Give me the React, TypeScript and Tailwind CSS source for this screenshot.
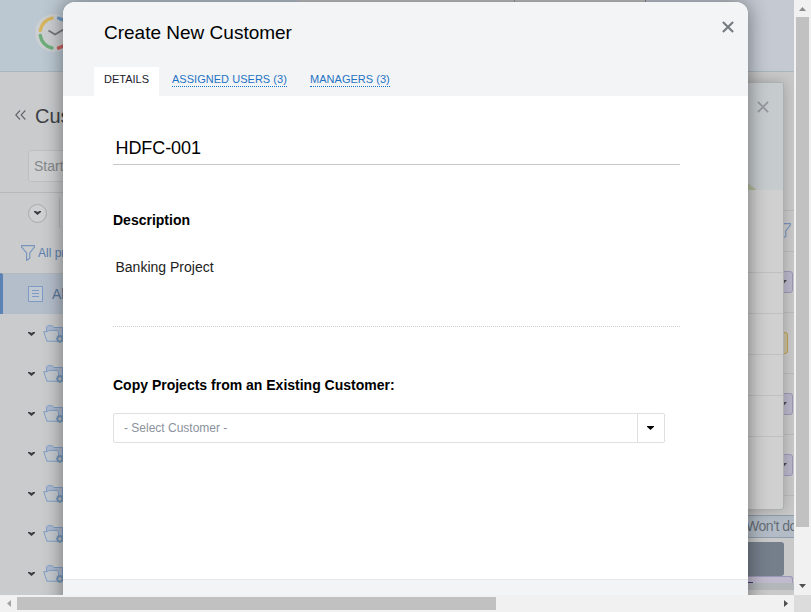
import type { ReactNode } from "react";

const folders = [1, 2, 3, 4, 5, 6, 7];

function Logo() {
  return (
    <svg width="38" height="40" viewBox="0 0 38 40" fill="none">
      <circle cx="19" cy="20" r="19" fill="#cccfd1" />
      <g strokeWidth="3.4" strokeLinecap="round">
        <path d="M5.3 17.5A14.8 14.8 0 0 1 17 5.2" stroke="#d6b55f" />
        <path d="M23.5 5.2A14.8 14.8 0 0 1 34.5 17.5" stroke="#6f9bc6" />
        <path d="M5.3 22.5A14.8 14.8 0 0 0 17 35" stroke="#6fae7c" />
        <path d="M23.5 35A14.8 14.8 0 0 0 34.5 22.5" stroke="#c9615e" />
      </g>
      <path d="M13.5 17.5l6.5 4 9.5-5.5" stroke="#73767c" strokeWidth="1.8" />
    </svg>
  );
}

function Funnel() {
  return (
    <svg className="shrink-0" width="14" height="16" viewBox="0 0 14 16" fill="none" stroke="#7793bd" strokeWidth="1.1">
      <path d="M.6.6h12.8v1.5L8.8 8v5.3L5.6 15.4V8L.6 2.1z" />
    </svg>
  );
}

function FolderIcon() {
  return (
    <svg className="shrink-0" width="22" height="19" viewBox="0 0 22 19" fill="none" stroke="#829fc8" strokeWidth="1">
      <path d="M3.5 7V2.3L4.7 .7h4.6l1.4 1.8h8.8V14" fill="#aebbcf" />
      <path d="M.7 6.7h4.1l1.2-1.3h8.6l1 1.6v9.2H4z" fill="#c5cbd0" />
      <circle cx="17" cy="13.8" r="2.6" strokeWidth="2" stroke="#7799bb" fill="#c0c5ca" />
      <path d="M17 9.9v1.3M17 16.5v1.5M13.1 13.8h1.3M19.7 13.8h1.3M14.2 11l.9.9M14.2 16.6l.9-.9M19.8 11l-.9.9" strokeWidth="1.5" stroke="#7799bb" />
    </svg>
  );
}

function Chevron() {
  return (
    <svg className="shrink-0" width="7" height="4" viewBox="0 0 7 4" fill="#3c3d40">
      <path d="M0 0h1.8l1.7 1L5.2 0H7v1L3.5 4 0 1z" />
    </svg>
  );
}

function Cross({ color, width }: { color: string; width: number }) {
  return (
    <svg width="12" height="12" viewBox="0 0 12 12" stroke={color} strokeWidth={width}>
      <path d="M.9.9l10.2 10.2M11.1.9L.9 11.1" />
    </svg>
  );
}

function Sidebar() {
  return (
    <aside className="flex w-[200px] shrink-0 flex-col bg-[#c9cbcd]">
      <div className="flex h-[78px] items-center gap-[9px] pt-[9px] pl-[15px]">
        <svg className="-mt-[2px]" width="11" height="10" viewBox="0 0 11 10" fill="none" stroke="#606469" strokeWidth="1.1">
          <path d="M5 .5L.8 5 5 9.5M10.3 .5L6.1 5l4.2 4.5" />
        </svg>
        <span className="text-[20px] leading-6 text-[#3d4043]">Customers</span>
      </div>
      <div className="ml-7 flex h-8 w-[160px] items-center rounded-[3px] border border-[#bdbfc0] bg-[#cfd0d1] pl-[5px] text-[14px] text-[#85888b]">
        Start typing
      </div>
      <div className="mt-[10px] flex h-[41px] shrink-0 items-center border-t border-[#b6b8ba] pl-7">
        <div className="flex h-[19px] w-[19px] items-center justify-center rounded-full border border-[#a9abad] bg-[#cfd0d1]">
          <Chevron />
        </div>
        <div className="ml-3 h-[30px] w-px bg-[#b6b8ba]" />
      </div>
      <div className="flex h-10 items-center gap-[3px] pl-[21px] text-[12px] text-[#5b7fae]">
        <Funnel />
        <span className="whitespace-nowrap">All projects</span>
      </div>
      <div className="flex h-[41px] items-center border-t border-l-[3px] border-t-[#b7babd] border-l-[#5a82b4] bg-[#b4becb] pl-[25px]">
        <svg width="15" height="16" viewBox="0 0 15 16" fill="none" stroke="#7e9ac4">
          <path d="M.5.5h14v15H.5z" fill="#c0c8d1" />
          <path d="M4 4.5h7M4 7.5h7M4 10.5h7" />
        </svg>
        <span className="ml-[9px] text-[14px] text-[#5b7799]">All Customers</span>
      </div>
      {folders.map((f) => (
        <div key={f} className="flex h-10 items-center gap-2 pl-7">
          <Chevron />
          <FolderIcon />
        </div>
      ))}
    </aside>
  );
}

function StatusRow({ children }: { children?: ReactNode }) {
  return <div className="flex h-[61px] items-center border-b border-[#babbbb]">{children}</div>;
}

function Badge() {
  return (
    <div className="flex h-[22px] w-[53px] items-center justify-end rounded-[3px] border border-[#9c97b8] bg-[#b9b6ca] pr-[5px]">
      <svg width="7" height="4" viewBox="0 0 7 4" fill="#4b4b50"><path d="M0 0h7L3.5 4z" /></svg>
    </div>
  );
}

function TaskColumn() {
  return (
    <div className="flex w-[54px] shrink-0 flex-col bg-[#c9c9c9]">
      <div className="h-[139px] border-b border-[#babbbb]" />
      <div className="flex h-[41px] items-center justify-end border-b border-[#babbbb] pr-[3px]">
        <Funnel />
      </div>
      <StatusRow><Badge /></StatusRow>
      <StatusRow>
        <div className="h-[22px] w-[48px] rounded-[3px] border border-[#c0a14d] bg-[#c8bd9f]" />
      </StatusRow>
      <StatusRow><Badge /></StatusRow>
      <StatusRow><Badge /></StatusRow>
      <div className="mt-[19px] flex h-[23px] shrink-0 items-center overflow-hidden border-y border-[#8f9eac] bg-[#b3bcc6] pl-[6px] text-[14px] tracking-[-0.45px] whitespace-nowrap text-[#656d76]">
        Won't do
      </div>
      <div className="mt-1 h-[34px] w-[44px] shrink-0 rounded-r-[3px] bg-[#757f8c]" />
      <div className="h-[7px] w-[53px] shrink-0 rounded-tr-[3px] border-t border-r border-[#9c97b8] bg-[#bfbacd] pt-[5px]">
        <div className="h-px w-[13px] bg-[#413a78]" />
      </div>
      <div className="h-[7px] shrink-0 bg-[#b3b7b9]" />
    </div>
  );
}

function DetailPanel() {
  return (
    <div className="absolute top-[82px] left-[600px] flex h-[428px] w-[184px] flex-col overflow-hidden rounded-[3px] border border-[#adb0b1] bg-[#d0d0d0] shadow-[0_0_14px_rgba(0,0,0,0.22)]">
      <div className="flex h-[107px] shrink-0 flex-col items-end justify-between bg-[#c6cbce] pt-[18px]">
        <div className="pr-[14px]"><Cross color="#9599a0" width={1.8} /></div>
        <svg className="mr-[26px]" width="12" height="9" viewBox="0 0 12 9" fill="#b5bd9f">
          <path d="M0 0l12 9H0z" />
        </svg>
      </div>
      <div className="h-[83px] border-b border-[#c0c0c0]" />
      <div className="h-[41px] border-b border-[#c0c0c0]" />
      <div className="h-[41px] border-b border-[#c0c0c0]" />
      <div className="h-[41px] border-b border-[#c0c0c0]" />
      <div className="h-[41px] border-b border-[#c0c0c0]" />
    </div>
  );
}

function Modal() {
  return (
    <div className="absolute top-[2px] left-[63px] flex h-[640px] w-[685px] flex-col rounded-[12px] bg-white text-black shadow-[0_0_20px_rgba(0,0,0,0.46)]">
      <div className="flex h-[94px] shrink-0 flex-col justify-between rounded-t-[12px] bg-[#f3f4f6]">
        <div className="flex items-start justify-between pt-[18px] pr-[14px] pl-[41px]">
          <h1 className="pt-px text-[19px] leading-6">Create New Customer</h1>
          <div className="pt-px"><Cross color="#757b82" width={2.1} /></div>
        </div>
        <div className="flex pl-[31px] text-[11px] leading-[13px]">
          <div className="h-[29px] w-[65px] bg-white pt-[6px] pl-[10px] text-[#1a1a2c]">DETAILS</div>
          <div className="ml-[13px] pt-[6px]">
            <a className="block w-[115px] border-b border-dotted border-[#1673c5] tracking-[0.03px] whitespace-nowrap text-[#1f73c4]">ASSIGNED USERS (3)</a>
          </div>
          <div className="ml-[23px] pt-[6px]">
            <a className="block w-[80px] border-b border-dotted border-[#1673c5] tracking-[0.03px] whitespace-nowrap text-[#1f73c4]">MANAGERS (3)</a>
          </div>
        </div>
      </div>
      <div className="flex h-[483px] shrink-0 flex-col pl-[50px]">
        <div className="mt-[36px] h-[33px] w-[567px] border-b border-[#c7c7c7] pt-[4px] pl-[2.5px] text-[18px] leading-6 tracking-[-0.08px]">HDFC-001</div>
        <h2 className="mt-[47px] text-[14px] leading-4 font-bold">Description</h2>
        <div className="mt-[31px] h-[68px] w-[567px] border-b border-dotted border-[#cfcfcf] pl-[2.5px] text-[14px] leading-4 text-[#222]">Banking Project</div>
        <h2 className="mt-[50px] text-[14px] leading-4 font-bold">Copy Projects from an Existing Customer:</h2>
        <div className="mt-5 flex h-[30px] w-[552px] items-center rounded-[2px] border border-[#dedfe0]">
          <span className="flex-1 pl-[10px] text-[12px] leading-4 text-[#8b929d]">- Select Customer -</span>
          <div className="flex h-full w-[27px] items-center justify-center border-l border-[#dedfe0] pr-px">
            <svg width="7" height="4" viewBox="0 0 7 4"><path d="M0 0h7v.8L3.5 4 0 .8z" /></svg>
          </div>
        </div>
      </div>
      <div className="flex-1 rounded-b-[12px] border-t border-[#e5e7e9] bg-[#f3f4f6]" />
    </div>
  );
}

export default function App() {
  return (
    <div className="grid h-[612px] w-[811px] grid-cols-[794px_17px] grid-rows-[595px_17px] overflow-hidden bg-[#f1f1f1] font-['Liberation_Sans',Arial,sans-serif]">
      <div className="relative flex min-h-0 min-w-0 flex-col overflow-hidden">
        <header className="flex h-[72px] shrink-0 border-b border-[#a9b6c0] bg-[#bbc7d1]">
          <div className="flex w-[298px] pt-[13px] pl-[35px]"><Logo /></div>
          <div className="w-[217px] border-r border-[#9b9c9d] bg-[#c6c8ca]" />
          <div className="w-[131px] border-r border-[#8f929c] bg-[#c8c8c8]" />
          <div className="flex-1 bg-[#c4c9d2]" />
        </header>
        <div className="flex min-h-0 flex-1">
          <Sidebar />
          <div className="flex-1 bg-[#c9c9c9]" />
          <TaskColumn />
        </div>
        <DetailPanel />
        <Modal />
      </div>
      <div className="flex flex-col items-center">
        <div className="flex h-[17px] items-center pt-px">
          <svg width="7" height="4" viewBox="0 0 7 4" fill="#8b8b8b"><path d="M0 4h7L3.5 0z" /></svg>
        </div>
        <div className="h-[510px] w-[13px] bg-[#c1c1c1]" />
        <div className="flex flex-1 items-center pt-[50px]">
          <svg width="7" height="4" viewBox="0 0 7 4" fill="#505050"><path d="M0 0h7L3.5 4z" /></svg>
        </div>
      </div>
      <div className="flex items-center">
        <div className="flex w-[17px] justify-center">
          <svg width="4" height="7" viewBox="0 0 4 7" fill="#a3a3a3"><path d="M4 0v7L0 3.5z" /></svg>
        </div>
        <div className="h-[13px] w-[479px] bg-[#c1c1c1]" />
        <div className="flex flex-1 justify-end pr-[6px]">
          <svg width="4" height="7" viewBox="0 0 4 7" fill="#505050"><path d="M0 0v7l4-3.5z" /></svg>
        </div>
      </div>
      <div className="bg-[#dcdcdc]" />
    </div>
  );
}
